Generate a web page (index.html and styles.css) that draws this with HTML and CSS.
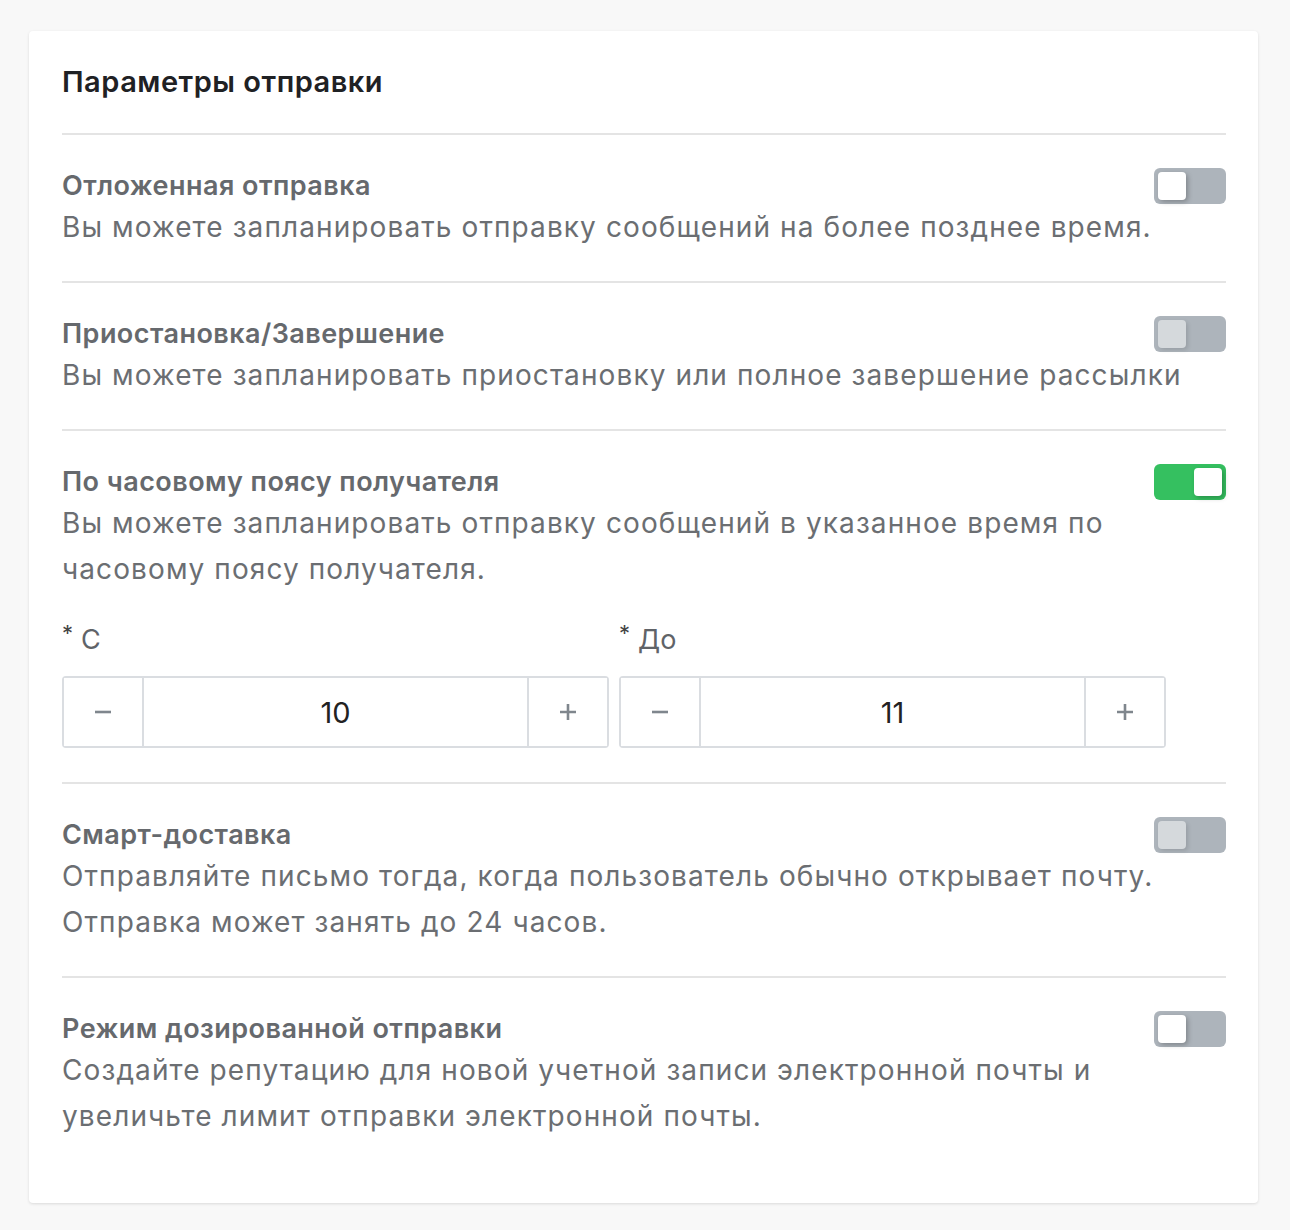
FILE: index.html
```html
<!DOCTYPE html>
<html lang="ru">
<head>
  <meta charset="UTF-8">
  <title>Параметры отправки</title>
  <link rel="stylesheet" href="styles.css">
</head>
<body>
  <div class="card">
    <div class="card-header">Параметры отправки</div>

    <div class="option">
      <div class="option-head">
        <div class="option-title">Отложенная отправка</div>
        <span class="switch"></span>
      </div>
      <div class="option-desc">Вы можете запланировать отправку сообщений на более позднее время.</div>
    </div>

    <div class="option">
      <div class="option-head">
        <div class="option-title">Приостановка/Завершение</div>
        <span class="switch disabled"></span>
      </div>
      <div class="option-desc">Вы можете запланировать приостановку или полное завершение рассылки</div>
    </div>

    <div class="option">
      <div class="option-head">
        <div class="option-title">По часовому поясу получателя</div>
        <span class="switch on"></span>
      </div>
      <div class="option-desc">Вы можете запланировать отправку сообщений в указанное время по часовому поясу получателя.</div>

      <div class="range">
        <div class="field">
          <div class="field-label"><span class="req">*</span>С</div>
          <div class="stepper">
            <button class="step"><svg width="18" height="18" viewBox="0 0 18 18"><path d="M1 9h16" /></svg></button>
            <div class="step-value">10</div>
            <button class="step"><svg width="18" height="18" viewBox="0 0 18 18"><path d="M1 9h16M9 1v16" /></svg></button>
          </div>
        </div>
        <div class="field">
          <div class="field-label"><span class="req">*</span>До</div>
          <div class="stepper">
            <button class="step"><svg width="18" height="18" viewBox="0 0 18 18"><path d="M1 9h16" /></svg></button>
            <div class="step-value">11</div>
            <button class="step"><svg width="18" height="18" viewBox="0 0 18 18"><path d="M1 9h16M9 1v16" /></svg></button>
          </div>
        </div>
      </div>
    </div>

    <div class="option">
      <div class="option-head">
        <div class="option-title">Смарт-доставка</div>
        <span class="switch disabled"></span>
      </div>
      <div class="option-desc">Отправляйте письмо тогда, когда пользователь обычно открывает почту. Отправка может занять до 24 часов.</div>
    </div>

    <div class="option">
      <div class="option-head">
        <div class="option-title">Режим дозированной отправки</div>
        <span class="switch"></span>
      </div>
      <div class="option-desc">Создайте репутацию для новой учетной записи электронной почты и увеличьте лимит отправки электронной почты.</div>
    </div>
  </div>
</body>
</html>
```

FILE: styles.css
```css
body {
  font-family: Inter, "Noto Sans", sans-serif;
  margin: 0;
  padding: 31px 32px 28px 29px;
  background-color: #f8f8f8;
}

.card {
  background: #fff;
  border-radius: 4px;
  box-shadow: 0 1px 3px rgba(0, 0, 0, 0.12);
  padding: 0 32px 33px 33px;
}

.card-header {
  padding: 32px 0;
  font-size: 29px;
  line-height: 38px;
  font-weight: 600;
  letter-spacing: 0.5px;
  color: #1f2124;
  border-bottom: 2px solid #e4e4e4;
}

.option {
  padding: 32px 0 31px;
  border-bottom: 2px solid #e4e4e4;
}

.option:last-child {
  border-bottom: none;
}

.option-head {
  display: flex;
  justify-content: space-between;
  align-items: center;
  height: 37px;
}

.option-title {
  font-size: 27px;
  font-weight: 600;
  letter-spacing: 0.45px;
  color: #66696d;
}

.option-desc {
  font-size: 28px;
  line-height: 46px;
  color: #6b6e72;
  letter-spacing: 1.1px;
  padding-right: 40px;
}

.switch {
  position: relative;
  width: 72px;
  height: 36px;
  border-radius: 6px;
  background: #adb4bb;
  flex-shrink: 0;
}

.switch::after {
  content: "";
  position: absolute;
  top: 4px;
  left: 4px;
  width: 28px;
  height: 28px;
  border-radius: 4px;
  background: #fff;
  box-shadow: 2px 2px 5px rgba(0, 0, 0, 0.25);
}

.switch.disabled::after {
  background: #d5d9dc;
  box-shadow: 2px 2px 4px rgba(0, 0, 0, 0.12);
}

.switch.on {
  background: #35c060;
}

.switch.on::after {
  left: 40px;
}

.range {
  display: grid;
  grid-template-columns: 547px 547px;
  gap: 10px;
  margin-top: 30px;
  margin-bottom: 3px;
}

.field-label {
  font-size: 27px;
  line-height: 36px;
  color: #606368;
  margin-bottom: 18px;
}

.req {
  display: inline-block;
  vertical-align: top;
  font-size: 22px;
  line-height: 22px;
  margin-right: 8px;
  color: #444;
}

.stepper {
  display: flex;
  height: 72px;
  box-sizing: border-box;
  border: 2px solid #dadde1;
  border-radius: 4px;
}

.step {
  width: 80px;
  border: none;
  background: #fff;
  padding: 0;
  display: flex;
  align-items: center;
  justify-content: center;
}

.step svg {
  stroke: #7f868d;
  stroke-width: 2.6;
  fill: none;
}

.step:first-child {
  border-right: 2px solid #dadde1;
}

.step:last-child {
  border-left: 2px solid #dadde1;
}

.step-value {
  flex: 1;
  display: flex;
  align-items: center;
  justify-content: center;
  font-size: 29px;
  color: #222;
}
```
